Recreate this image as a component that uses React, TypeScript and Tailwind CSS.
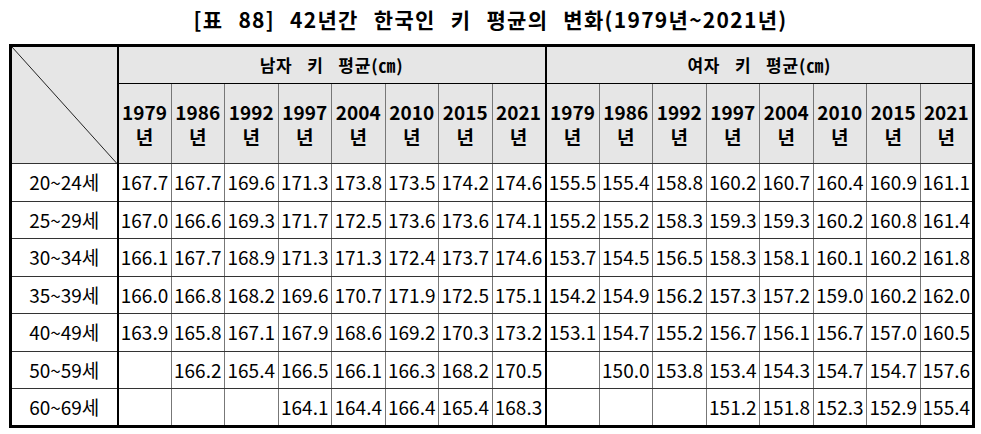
const years = ["1979", "1986", "1992", "1997", "2004", "2010", "2015", "2021"];

const rows: { label: string; male: string[]; female: string[] }[] = [
  {
    label: "20~24세",
    male: ["167.7", "167.7", "169.6", "171.3", "173.8", "173.5", "174.2", "174.6"],
    female: ["155.5", "155.4", "158.8", "160.2", "160.7", "160.4", "160.9", "161.1"],
  },
  {
    label: "25~29세",
    male: ["167.0", "166.6", "169.3", "171.7", "172.5", "173.6", "173.6", "174.1"],
    female: ["155.2", "155.2", "158.3", "159.3", "159.3", "160.2", "160.8", "161.4"],
  },
  {
    label: "30~34세",
    male: ["166.1", "167.7", "168.9", "171.3", "171.3", "172.4", "173.7", "174.6"],
    female: ["153.7", "154.5", "156.5", "158.3", "158.1", "160.1", "160.2", "161.8"],
  },
  {
    label: "35~39세",
    male: ["166.0", "166.8", "168.2", "169.6", "170.7", "171.9", "172.5", "175.1"],
    female: ["154.2", "154.9", "156.2", "157.3", "157.2", "159.0", "160.2", "162.0"],
  },
  {
    label: "40~49세",
    male: ["163.9", "165.8", "167.1", "167.9", "168.6", "169.2", "170.3", "173.2"],
    female: ["153.1", "154.7", "155.2", "156.7", "156.1", "156.7", "157.0", "160.5"],
  },
  {
    label: "50~59세",
    male: ["", "166.2", "165.4", "166.5", "166.1", "166.3", "168.2", "170.5"],
    female: ["", "150.0", "153.8", "153.4", "154.3", "154.7", "154.7", "157.6"],
  },
  {
    label: "60~69세",
    male: ["", "", "", "164.1", "164.4", "166.4", "165.4", "168.3"],
    female: ["", "", "", "151.2", "151.8", "152.3", "152.9", "155.4"],
  },
];

function DataCells({ values, last }: { values: string[]; last: boolean }) {
  return (
    <>
      {values.map((v, i) => (
        <td
          key={i}
          className={
            "border border-[#777] border-b-[#333] text-center px-0 whitespace-nowrap " +
            (i === 7 && !last ? "border-r-2 border-r-black" : "")
          }
        >
          {v}
        </td>
      ))}
    </>
  );
}

export default function App() {
  return (
    <div
      className="w-[981px] h-[434px] bg-white text-black pt-[5px] pl-[9px]"
      style={{ fontFamily: '"Noto Sans CJK KR", "Noto Sans", sans-serif' }}
    >
      <h1 className="text-center text-[21px] font-bold leading-[28px] tracking-[1.3px] [word-spacing:9px] pr-[9px] h-[39px]">
        [표 88] 42년간 한국인 키 평균의 변화(1979년~2021년)
      </h1>
      <table className="w-[963px] table-fixed border-collapse border-[3px] border-black text-[19px]">
        <colgroup>
          <col className="w-[107px]" />
          {Array.from({ length: 16 }).map((_, i) => (
            <col key={i} className="w-[53.5px]" />
          ))}
        </colgroup>
        <thead>
          <tr className="h-[38px] bg-[#e6e6e6]">
            <th rowSpan={2} className="relative border-r-2 border-r-black border-b border-b-[#333] p-0">
              <svg className="absolute inset-0 w-full h-full" preserveAspectRatio="none" viewBox="0 0 100 100">
                <line x1="0" y1="0" x2="100" y2="100" stroke="#222" strokeWidth="1" vectorEffect="non-scaling-stroke" />
              </svg>
            </th>
            <th colSpan={8} className="border-b border-b-black border-r-2 border-r-black font-bold text-[17px] tracking-[0.8px] [word-spacing:10px]">
              남자 키 평균(㎝)
            </th>
            <th colSpan={8} className="border-b border-b-black font-bold text-[17px] tracking-[0.8px] [word-spacing:10px]">
              여자 키 평균(㎝)
            </th>
          </tr>
          <tr className="h-[80px] bg-[#e6e6e6]">
            {[...years, ...years].map((y, i) => (
              <th
                key={i}
                className={
                  "border border-[#777] border-t-black border-b-[#333] font-bold leading-[25px] px-0 " +
                  (i === 7 ? "border-r-2 border-r-black" : "")
                }
              >
                {y}
                <br />년
              </th>
            ))}
          </tr>
        </thead>
        <tbody>
          {rows.map((r) => (
            <tr key={r.label} className="h-[37.5px]">
              <td className="border-r-2 border-r-black border-b border-b-[#333] text-center">{r.label}</td>
              <DataCells values={r.male} last={false} />
              <DataCells values={r.female} last={true} />
            </tr>
          ))}
        </tbody>
      </table>
    </div>
  );
}
